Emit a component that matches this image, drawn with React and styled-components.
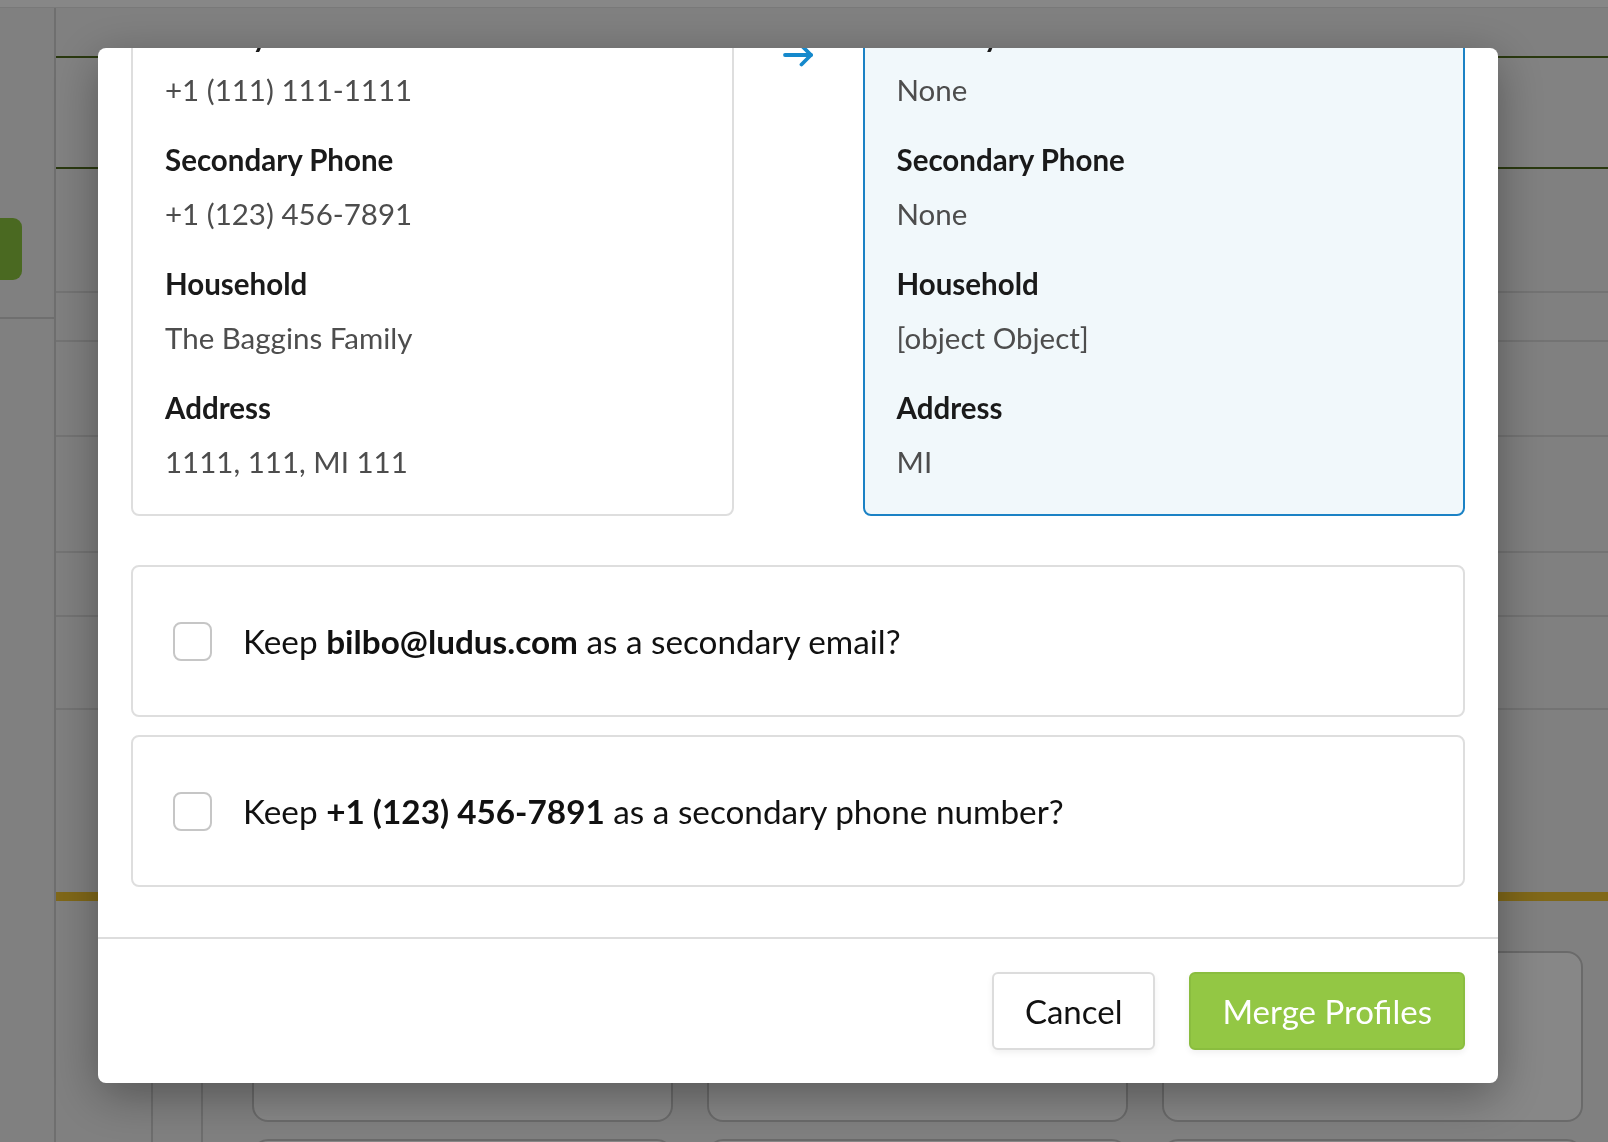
import React, { useLayoutEffect, useRef } from "react";
import styled, { createGlobalStyle } from "styled-components";

const GlobalStyle = createGlobalStyle`
  html, body { margin: 0; padding: 0; }
  body {
    font-family: "Lato", "Open Sans", "Noto Sans", sans-serif;
    background: #f2f2f2;
    overflow: hidden;
  }
  *, *::before, *::after { box-sizing: border-box; }
`;

/* ---------- page behind the dialog ---------- */

const Screen = styled.div`
  width: 1608px;
  height: 1142px;
  display: flex;
  flex-direction: column;
  overflow: hidden;
  background: #f2f2f2;
`;

const TopStrip = styled.div`
  height: 8px;
  flex: none;
  background: #ffffff;
  border-bottom: 1px solid #e4e4e4;
`;

const Workspace = styled.div`
  flex: 1;
  display: flex;
  min-height: 0;
`;

const Sidebar = styled.aside`
  width: 56px;
  flex: none;
  display: flex;
  flex-direction: column;
  padding-top: 210px;
  background: #f2f2f2;
  border-right: 2px solid #d2d2d2;
`;

const SideButton = styled.div`
  width: 22px;
  height: 62px;
  background: #8dc63f;
  border-radius: 0 9px 9px 0;
`;

const SideDivider = styled.div`
  margin-top: 37px;
  border-top: 2px solid #d2d2d2;
`;

const Main = styled.main`
  flex: 1;
  display: flex;
  flex-direction: column;
  min-width: 0;
`;

const ListRow = styled.div`
  flex: none;
  height: ${(p) => p.$h}px;
  background: ${(p) => p.$bg || "transparent"};
  border-bottom: ${(p) => (p.$line ? `2px solid ${p.$line}` : "none")};
`;

const Banner = styled.div`
  flex: none;
  height: 9px;
  background: #f2c42e;
`;

const Section = styled.div`
  flex: 1;
  display: flex;
  padding-left: ${(p) => p.$pad}px;
`;

const Nested = styled.div`
  flex: 1;
  display: flex;
  border-left: 2px solid #cfcfcf;
  padding-left: ${(p) => p.$pad}px;
`;

const TileGrid = styled.div`
  flex: 1;
  display: grid;
  grid-template-columns: repeat(3, 421px);
  grid-auto-rows: 171px;
  column-gap: 34px;
  row-gap: 17px;
  padding-top: 50px;
`;

const Tile = styled.div`
  background: #ffffff;
  border: 2px solid #c9c9c9;
  border-radius: 16px;
`;

/* ---------- dialog ---------- */

const Overlay = styled.div`
  position: fixed;
  inset: 0;
  background: rgba(0, 0, 0, 0.47);
  display: flex;
  padding: 48px 110px 59px 98px;
`;

const Modal = styled.div`
  flex: 1;
  display: flex;
  flex-direction: column;
  background: #ffffff;
  border-radius: 8px;
  overflow: hidden;
  box-shadow: 0 12px 48px rgba(0, 0, 0, 0.35);
`;

const Body = styled.div`
  flex: 1;
  min-height: 0;
  overflow-y: auto;
  scrollbar-width: none;
  padding: 34px 33px 50px;
  &::-webkit-scrollbar { display: none; }
`;

const Title = styled.h2`
  margin: 0 0 12px;
  font-size: 34px;
  font-weight: 700;
  color: #1a1a1a;
`;

const Intro = styled.p`
  margin: 0 0 34px;
  font-size: 27px;
  line-height: 38px;
  color: #505050;
`;

const Compare = styled.div`
  display: grid;
  grid-template-columns: 1fr 129px 1fr;
  align-items: stretch;
`;

const ArrowCell = styled.div`
  display: flex;
  align-items: center;
  justify-content: center;
  padding-bottom: 16px;
  color: #1589cc;
`;

const ProfileCard = styled.div`
  display: flex;
  flex-direction: column;
  gap: 30px;
  padding: 32px;
  border-radius: 8px;
  border: 2px solid ${(p) => (p.$target ? "#1b82c5" : "#dedede")};
  background: ${(p) => (p.$target ? "#f1f8fb" : "#ffffff")};
`;

const Field = styled.div`
  display: flex;
  flex-direction: column;
  gap: 14px;
`;

const Label = styled.div`
  font-size: 29.5px;
  line-height: 40px;
  font-weight: 700;
  color: #1a1a1a;
`;

const Value = styled.div`
  font-size: 29.5px;
  line-height: 40px;
  color: #4d4d4d;
`;

const Options = styled.div`
  display: flex;
  flex-direction: column;
  gap: 18px;
  margin-top: 49px;
`;

const OptionCard = styled.label`
  height: 152px;
  display: flex;
  align-items: center;
  gap: 31px;
  padding: 0 40px;
  border: 2px solid #dedede;
  border-radius: 8px;
  cursor: pointer;
`;

const Box = styled.span`
  width: 39px;
  height: 39px;
  flex: none;
  border: 2px solid #c6c6c6;
  border-radius: 8px;
  background: #ffffff;
`;

const OptionText = styled.span`
  font-size: 33.3px;
  color: #111111;
  b { font-weight: 700; }
`;

const Footer = styled.div`
  flex: none;
  display: flex;
  justify-content: flex-end;
  gap: 34px;
  padding: 33px 33px;
  border-top: 2px solid #dddddd;
`;

const Button = styled.button`
  height: 78px;
  padding: 0 31px;
  font-family: inherit;
  font-size: 33px;
  border-radius: 6px;
  cursor: pointer;
  color: ${(p) => (p.$primary ? "#ffffff" : "#111111")};
  background: ${(p) => (p.$primary ? "#93c744" : "#ffffff")};
  border: 2px solid ${(p) => (p.$primary ? "#8abd3f" : "#dcdcdc")};
  box-shadow: 0 3px 6px rgba(0, 0, 0, 0.06);
`;

const ArrowIcon = () => (
  <svg width="33" height="26" viewBox="0 0 33 26" fill="none" stroke="currentColor"
    strokeWidth="3.8" strokeLinecap="round" strokeLinejoin="round">
    <path d="M3 13H29" />
    <path d="M19.5 3.5L29 13L19.5 22.5" />
  </svg>
);

const duplicate = [
  ["First Name", "Bilbo"],
  ["Last Name", "Baggins"],
  ["Email", "bilbo@ludus.com"],
  ["Primary Phone", "+1 (111) 111-1111"],
  ["Secondary Phone", "+1 (123) 456-7891"],
  ["Household", "The Baggins Family"],
  ["Address", "1111, 111, MI 111"],
];

const keeper = [
  ["First Name", "Bilbo"],
  ["Last Name", "Baggins"],
  ["Email", "bilbo.baggins@ludus.com"],
  ["Primary Phone", "None"],
  ["Secondary Phone", "None"],
  ["Household", "[object Object]"],
  ["Address", "MI"],
];

const rows = [
  { h: 50, line: "#4f6b1e" },
  { h: 111, line: "#4f6b1e", bg: "#f6f6f6" },
  { h: 124, line: "#dadada" },
  { h: 49, line: "#dadada" },
  { h: 95, line: "#dadada" },
  { h: 116, line: "#dadada" },
  { h: 64, line: "#dadada" },
  { h: 93, line: "#dadada" },
  { h: 182 },
];

function Profile({ fields, target }) {
  return (
    <ProfileCard $target={target}>
      {fields.map(([label, value]) => (
        <Field key={label}>
          <Label>{label}</Label>
          <Value>{value}</Value>
        </Field>
      ))}
    </ProfileCard>
  );
}

export default function App() {
  const bodyRef = useRef(null);

  useLayoutEffect(() => {
    const el = bodyRef.current;
    if (el) el.scrollTop = el.scrollHeight;
  }, []);

  return (
    <>
      <GlobalStyle />
      <Screen>
        <TopStrip />
        <Workspace>
          <Sidebar>
            <SideButton />
            <SideDivider />
          </Sidebar>
          <Main>
            {rows.map((r, i) => (
              <ListRow key={i} $h={r.h} $line={r.line} $bg={r.bg} />
            ))}
            <Banner />
            <Section $pad={95}>
              <Nested $pad={48}>
                <Nested $pad={49}>
                  <TileGrid>
                    {Array.from({ length: 6 }).map((_, i) => (
                      <Tile key={i} />
                    ))}
                  </TileGrid>
                </Nested>
              </Nested>
            </Section>
          </Main>
        </Workspace>
      </Screen>

      <Overlay>
        <Modal role="dialog" aria-label="Merge Profiles">
          <Body ref={bodyRef}>
            <Title>Merge Profiles</Title>
            <Intro>
              The profile on the left will be merged into the profile on the right.
            </Intro>
            <Compare>
              <Profile fields={duplicate} />
              <ArrowCell>
                <ArrowIcon />
              </ArrowCell>
              <Profile fields={keeper} target />
            </Compare>
            <Options>
              <OptionCard>
                <Box />
                <OptionText>
                  Keep <b>bilbo@ludus.com</b> as a secondary email?
                </OptionText>
              </OptionCard>
              <OptionCard>
                <Box />
                <OptionText>
                  Keep <b>+1 (123) 456-7891</b> as a secondary phone number?
                </OptionText>
              </OptionCard>
            </Options>
          </Body>
          <Footer>
            <Button type="button">Cancel</Button>
            <Button type="button" $primary>Merge Profiles</Button>
          </Footer>
        </Modal>
      </Overlay>
    </>
  );
}
